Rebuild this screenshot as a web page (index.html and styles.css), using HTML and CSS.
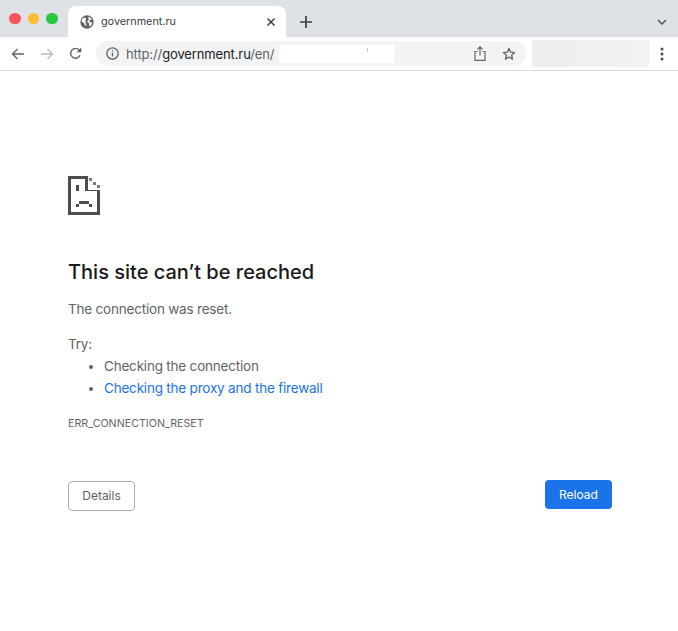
FILE: index.html
```html
<!DOCTYPE html>
<html lang="en">
<head>
<meta charset="utf-8">
<title>government.ru</title>
<link rel="stylesheet" href="styles.css">
</head>
<body>
<header class="chrome">
  <div class="tabstrip">
    <div class="lights"><i class="light red"></i><i class="light yellow"></i><i class="light green"></i></div>
    <div class="tab">
      <svg class="globe" width="14" height="14" viewBox="0 0 14 14"><circle cx="7" cy="7" r="6.7" fill="#5f6368"/><path d="M2.2 3.6 5 2.6l1.2 1.2-1 1.4.9 1.2-1 1.2 1.1 1.4.1 2-1.2-.6L3.6 7.800 1.600 6.400zM8.200 1.700l2.800 1.300.7 2-1.900-.2-.6 1.200L11 7.800l1.300-.6-.4 2.300-1.900 2-1-1.200.2-2-1.800-1.100.4-1.900 1-.4-.4-1.500z" fill="#fff"/></svg>
      <span class="tab-title">government.ru</span>
      <svg class="tab-close" width="10" height="10" viewBox="0 0 10 10"><path d="M1.500 1.500l7 7m0-7l-7 7" stroke="#3c4043" stroke-width="1.500" fill="none"/></svg>
    </div>
    <svg class="newtab" width="12" height="12" viewBox="0 0 12 12"><path d="M6 0v12M0 6h12" stroke="#3c4043" stroke-width="1.700" fill="none"/></svg>
    <svg class="caret" width="10" height="6" viewBox="0 0 10 6"><path d="M1 1l4 4 4-4" stroke="#4a4d51" stroke-width="1.400" fill="none"/></svg>
  </div>
  <div class="toolbar">
    <svg class="nav back" width="14" height="12" viewBox="0 0 14 12"><path d="M13 6H1.500M6.500 1l-5 5 5 5" stroke="#5f6368" stroke-width="1.400" fill="none"/></svg>
    <svg class="nav forward" width="14" height="12" viewBox="0 0 14 12"><path d="M1 6h11.500M7.500 1l5 5-5 5" stroke="#b6b9bd" stroke-width="1.400" fill="none"/></svg>
    <svg class="nav reload-icon" width="13" height="13" viewBox="0 0 13 13"><path d="M11 8.300A4.900 4.900 0 1 1 10.200 3" stroke="#5f6368" stroke-width="1.400" fill="none"/><path d="M12.300 .6v4.600H7.700z" fill="#5f6368"/></svg>
    <div class="omnibox">
      <svg class="info" width="13" height="13" viewBox="0 0 12 12"><circle cx="6" cy="6" r="5.200" stroke="#5f6368" stroke-width="1.200" fill="none"/><path d="M5.400 5.200h1.200v3.600H5.400zM5.400 3h1.200v1.200H5.400z" fill="#5f6368"/></svg>
      <span class="url"><span class="url-dim">http://</span>government.ru<span class="url-dim">/en/</span></span>
      <span class="redact"></span>
      <svg class="share" width="12" height="15" viewBox="0 0 12 15"><path d="M3.500 5.500H1v8.800h10V5.500H8.500" stroke="#5f6368" stroke-width="1.200" fill="none"/><path d="M6 9.500V1M3.400 3.400 6 .9l2.600 2.500" stroke="#5f6368" stroke-width="1.200" fill="none"/></svg>
      <svg class="star" width="14" height="14" viewBox="0 0 14 14"><path d="M7 1.500l1.600 3.700 4 .35-3 2.650.9 3.900L7 10.050 3.500 12.100l.9-3.900-3-2.650 4-.35z" stroke="#5f6368" stroke-width="1.300" stroke-linejoin="round" fill="none"/></svg>
    </div>
    <div class="profile-blur"></div>
    <svg class="kebab" width="4" height="14" viewBox="0 0 4 14"><circle cx="2" cy="2" r="1.500" fill="#4a4d51"/><circle cx="2" cy="7" r="1.500" fill="#4a4d51"/><circle cx="2" cy="12" r="1.500" fill="#4a4d51"/></svg>
  </div>
</header>
<main class="error">
  <svg class="sad" width="33" height="40" viewBox="0 0 33 40" shape-rendering="crispEdges">
    <path d="M0 0h20v14h12v25H0zM3 3v33h26V15H17V3z" fill-rule="evenodd" fill="#4d4d4d"/>
    <path d="M21 2h3v3h-3zM25 6h3v3h-3zM29 9h3v3h-3z" fill="#7c7c7c"/>
    <path d="M8 9h3v6H8zM11 25h10v3H11zM8 28h3v3H8zM21 28h3v3h-3z" fill="#4d4d4d"/>
  </svg>
  <h1 class="title">This site can’t be reached</h1>
  <p class="reason">The connection was reset.</p>
  <p class="try">Try:</p>
  <ul class="tips">
    <li>Checking the connection</li>
    <li><a class="link" href="#">Checking the proxy and the firewall</a></li>
  </ul>
  <p class="code">ERR_CONNECTION_RESET</p>
  <div class="actions">
    <button class="btn details">Details</button>
    <button class="btn reload">Reload</button>
  </div>
</main>
</body>
</html>
```
FILE: styles.css
```css
* { box-sizing: border-box; }
html, body { margin: 0; height: 100%; }
body { background: #fff; font-family: Inter, "Liberation Sans", sans-serif; overflow: hidden; }
.chrome { height: 71px; border-bottom: 1px solid #d9dadc; }
.tabstrip { position: relative; height: 37px; background: #dee1e6; display: flex; align-items: flex-end; }
.lights { display: flex; gap: 7px; padding: 0 0 13px 9px; width: 68px; }
.light { width: 11.500px; height: 11.500px; border-radius: 50%; }
.red { background: #f9545a; }
.yellow { background: #fdbb2d; }
.green { background: #29c93f; }
.tab { width: 218px; height: 31px; background: #fff; border-radius: 8px 8px 0 0; display: flex; align-items: center; padding: 0 10px 0 12px; }
.globe { flex: none; }
.tab-title { margin-left: 7px; font-size: 10.800px; color: #3c4043; flex: 1; }
.newtab { margin: 0 0 9px 14px; }
.caret { position: absolute; right: 11px; top: 19px; }
.toolbar { height: 33px; display: flex; align-items: center; }
.nav { flex: none; }
.back { margin-left: 11px; }
.forward { margin-left: 15px; }
.reload-icon { margin-left: 15px; }
.omnibox { margin-left: 14px; width: 430px; height: 25px; border-radius: 13px; background: #f1f3f4; display: flex; align-items: center; padding-left: 10px; }
.info { flex: none; }
.url { margin-left: 7px; font-size: 13px; letter-spacing: -0.120px; color: #202124; white-space: nowrap; }
.url-dim { color: #5f6368; }
.redact { position: relative; width: 115px; height: 18px; margin-left: 5px; background: #fff; flex: none; }
.redact::after { content: ""; position: absolute; left: 88px; top: 3px; width: 1px; height: 4px; background: #c4c6c9; }
.share { margin-left: 80px; flex: none; }
.star { margin-left: 16px; flex: none; }
.profile-blur { margin-left: 6px; width: 117px; height: 27px; background: linear-gradient(90deg, #eceef0, #f1f2f4); }
.kebab { margin-left: 11px; }
.error { padding: 105px 66px 0 68px; color: #5f6368; }
.sad { display: block; }
.title { margin: 43px 0 0; font-size: 20px; line-height: 26px; font-weight: 500; color: #1a1a1a; }
.reason { margin: 14px 0 0; font-size: 13.500px; letter-spacing: -0.200px; line-height: 20px; }
.try { margin: 15px 0 0; font-size: 13.500px; letter-spacing: -0.200px; line-height: 20px; }
.tips { margin: 2px 0 0; padding-left: 36px; font-size: 13.500px; letter-spacing: -0.200px; line-height: 20px; }
.tips li + li { margin-top: 1.500px; }
.link { color: #1a73e8; text-decoration: none; }
.code { margin: 19px 0 0; font-size: 10.700px; line-height: 14px; }
.actions { display: flex; justify-content: space-between; align-items: flex-start; margin-top: 50px; }
.btn { font-family: inherit; font-size: 12px; border-radius: 4px; }
.details { width: 67px; height: 30px; background: #fff; border: 1px solid #a9acb0; color: #5f6368; }
.reload { width: 67px; height: 29px; background: #1a73e8; border: 0; color: #fff; margin-top: -1px; }
```
